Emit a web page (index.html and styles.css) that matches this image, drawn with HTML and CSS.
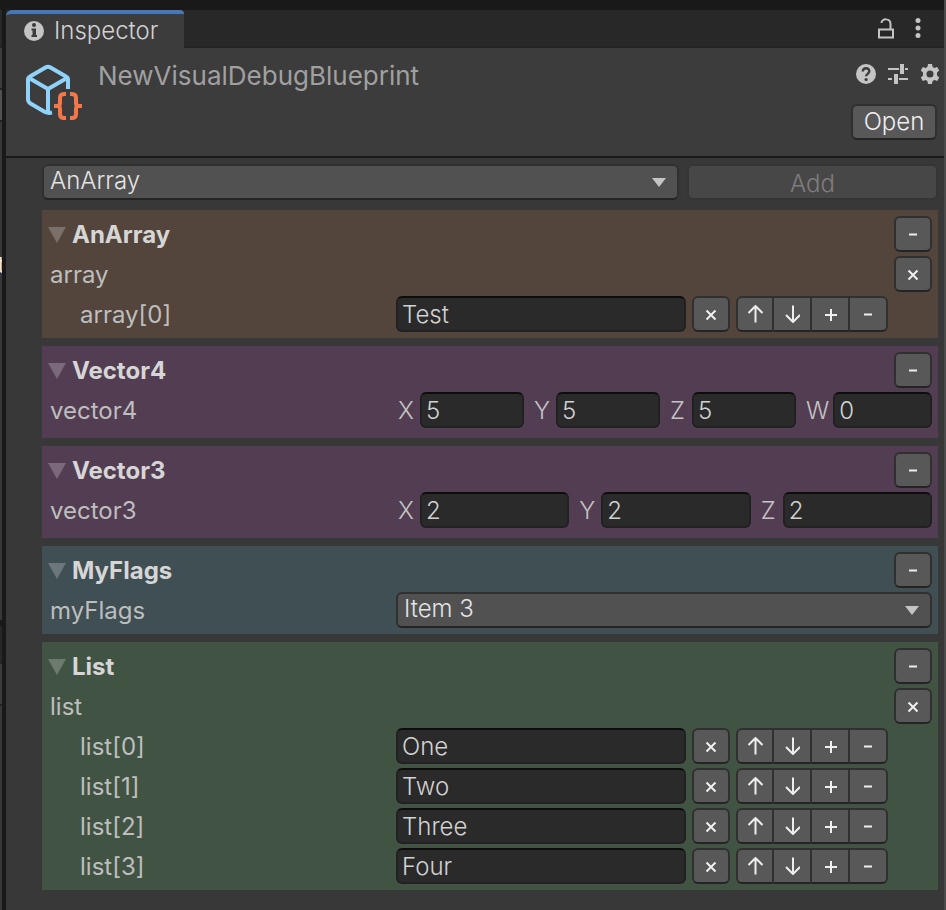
FILE: index.html
```
<!DOCTYPE html>
<html lang="en">
<head>
<meta charset="utf-8">
<title>Inspector</title>
<link rel="stylesheet" href="styles.css">
</head>
<body>
<svg class="sprite" aria-hidden="true">
  <symbol id="times" viewBox="0 0 16 16"><path d="M3.500 4.500l9 9M12.500 4.500l-9 9"/></symbol>
  <symbol id="up" viewBox="0 0 16 18"><path d="M8.500 17.500V1.500M1.500 8l7-7 7 7"/></symbol>
  <symbol id="down" viewBox="0 0 16 18"><path d="M9 .5v16M2 10l7 7 7-7"/></symbol>
  <symbol id="plus" viewBox="0 0 16 16"><path d="M3 9h12M9 3v12"/></symbol>
  <symbol id="minus" viewBox="0 0 16 16"><path d="M4 8.500h8"/></symbol>
</svg>
<div class="window">
  <div class="dock-left" aria-hidden="true">
    <i class="strip"></i><i class="toolbar"></i><i class="field"></i><i class="list"><b>t</b></i>
    <i class="gap"></i><i class="strip"></i><i class="toolbar"></i><i class="rest"></i>
  </div>
  <main class="inspector">
    <div class="tabs">
      <div class="tab">
        <svg width="20" height="20" viewBox="0 0 20 20"><circle cx="10" cy="10" r="10" fill="#c4c4c4"/><circle cx="10" cy="4" r="2" fill="#3c3c3c"/><path d="M7.500 7.500H12V14h1v2H7.500v-2h1V9.500h-1z" fill="#3c3c3c"/></svg>
        <span>Inspector</span>
      </div>
      <div class="tab-tools">
        <button class="icon" aria-label="Lock"><svg width="20" height="22" viewBox="0 0 20 22" fill="none" stroke="#c4c4c4" stroke-width="2"><path d="M3 11.500h14v8H3zM5.500 5c0-5 9-5 9 1v5"/></svg></button>
        <button class="icon" aria-label="More"><svg width="8" height="22" viewBox="0 0 8 22" fill="#c4c4c4"><circle cx="4" cy="2.500" r="2.500"/><circle cx="4" cy="10" r="2.500"/><circle cx="4" cy="17.500" r="2.500"/></svg></button>
      </div>
    </div>
    <header class="header">
      <svg class="asset" width="58" height="58" viewBox="0 0 58 58" fill="none">
        <g stroke="#8fd3fb" stroke-width="4" stroke-linejoin="round"><path d="M42 25V15q0-1.500-2-2.500L24.500 3.500Q22 2 19.500 3.500L4 12.500Q2 13.500 2 15.500V35q0 3 2.500 4.500L19 48q3 1.500 7 .5M3 14l19 11 19-11M22 25v24"/></g>
        <g stroke="#f2784b" stroke-width="4"><path d="M40 30h-2q-4 0-4 4v5q0 3-3 3h-3M40 54h-2q-4 0-4-4v-5q0-3-3-3h-3M44 30h2q4 0 4 4v5q0 3 3 3h3M44 54h2q4 0 4-4v-5q0-3 3-3h3"/></g>
      </svg>
      <h1>NewVisualDebugBlueprint</h1>
      <div class="header-side">
        <div class="header-tools">
          <button class="icon" aria-label="Help"><svg width="20" height="20" viewBox="0 0 20 20"><circle cx="10" cy="10" r="10" fill="#c4c4c4"/><path d="M6.800 7.500C6.800 3.200 13.300 3.200 13.300 7.300c0 2.500-3.200 2.700-3.200 5" fill="none" stroke="#3c3c3c" stroke-width="2.400"/><circle cx="10.100" cy="15.500" r="1.600" fill="#3c3c3c"/></svg></button>
          <button class="icon" aria-label="Presets"><svg width="20" height="20" viewBox="0 0 20 20" fill="#c4c4c4"><path d="M0 4h11v2H0zM12 0h4v10h-4zM17 4h3v2h-3zM0 14h4v2H0zM6 10h4v10H6zM11 14h9v2h-9z"/></svg></button>
          <button class="icon" aria-label="Settings"><svg width="20" height="20" viewBox="0 0 20 20"><path fill="#c4c4c4" fill-rule="evenodd" d="M8 0h4l.6 3 1.800 1 2.800-1 2 3.500L17 8.500v3l2.200 2-2 3.500-2.800-1-1.800 1-.6 3H8l-.6-3-1.800-1-2.800 1-2-3.500 2.200-2v-3L.8 6.500l2-3.500 2.800 1 1.800-1zM10 6.500a3.500 3.500 0 1 0 0 7 3.500 3.500 0 0 0 0-7z"/></svg></button>
        </div>
        <button class="btn open">Open</button>
      </div>
    </header>
    <div class="body">
      <div class="add-row">
        <div class="dropdown"><select aria-label="Type"><option>AnArray</option></select></div>
        <button class="btn add" disabled>Add</button>
      </div>

      <section class="card brown">
        <div class="row"><h2>AnArray</h2><button class="btn sq" aria-label="Remove"><svg><use href="#minus"/></svg></button></div>
        <div class="row"><span class="name">array</span><button class="btn sq" aria-label="Clear"><svg><use href="#times"/></svg></button></div>
        <div class="row item"><label class="name" for="a0">array[0]</label><input id="a0" value="Test"><button class="btn sq" aria-label="Clear"><svg><use href="#times"/></svg></button><div class="group"><button class="btn sq" aria-label="Up"><svg class="arrow"><use href="#up"/></svg></button><button class="btn sq" aria-label="Down"><svg class="arrow"><use href="#down"/></svg></button><button class="btn sq" aria-label="Insert"><svg><use href="#plus"/></svg></button><button class="btn sq" aria-label="Remove"><svg><use href="#minus"/></svg></button></div></div>
      </section>

      <section class="card purple">
        <div class="row"><h2>Vector4</h2><button class="btn sq" aria-label="Remove"><svg><use href="#minus"/></svg></button></div>
        <div class="row"><span class="name">vector4</span>
          <div class="vector"><label><span>X</span><input value="5"></label><label><span>Y</span><input value="5"></label><label><span>Z</span><input value="5"></label><label><span>W</span><input value="0"></label></div>
        </div>
      </section>

      <section class="card purple">
        <div class="row"><h2>Vector3</h2><button class="btn sq" aria-label="Remove"><svg><use href="#minus"/></svg></button></div>
        <div class="row"><span class="name">vector3</span>
          <div class="vector"><label><span>X</span><input value="2"></label><label><span>Y</span><input value="2"></label><label><span>Z</span><input value="2"></label></div>
        </div>
      </section>

      <section class="card blue">
        <div class="row"><h2>MyFlags</h2><button class="btn sq" aria-label="Remove"><svg><use href="#minus"/></svg></button></div>
        <div class="row"><label class="name" for="flags">myFlags</label><div class="dropdown"><select id="flags"><option>Item 3</option></select></div></div>
      </section>

      <section class="card green">
        <div class="row"><h2>List</h2><button class="btn sq" aria-label="Remove"><svg><use href="#minus"/></svg></button></div>
        <div class="row"><span class="name">list</span><button class="btn sq" aria-label="Clear"><svg><use href="#times"/></svg></button></div>
        <div class="row item"><label class="name" for="l0">list[0]</label><input id="l0" value="One"><button class="btn sq" aria-label="Clear"><svg><use href="#times"/></svg></button><div class="group"><button class="btn sq" aria-label="Up"><svg class="arrow"><use href="#up"/></svg></button><button class="btn sq" aria-label="Down"><svg class="arrow"><use href="#down"/></svg></button><button class="btn sq" aria-label="Insert"><svg><use href="#plus"/></svg></button><button class="btn sq" aria-label="Remove"><svg><use href="#minus"/></svg></button></div></div>
        <div class="row item"><label class="name" for="l1">list[1]</label><input id="l1" value="Two"><button class="btn sq" aria-label="Clear"><svg><use href="#times"/></svg></button><div class="group"><button class="btn sq" aria-label="Up"><svg class="arrow"><use href="#up"/></svg></button><button class="btn sq" aria-label="Down"><svg class="arrow"><use href="#down"/></svg></button><button class="btn sq" aria-label="Insert"><svg><use href="#plus"/></svg></button><button class="btn sq" aria-label="Remove"><svg><use href="#minus"/></svg></button></div></div>
        <div class="row item"><label class="name" for="l2">list[2]</label><input id="l2" value="Three"><button class="btn sq" aria-label="Clear"><svg><use href="#times"/></svg></button><div class="group"><button class="btn sq" aria-label="Up"><svg class="arrow"><use href="#up"/></svg></button><button class="btn sq" aria-label="Down"><svg class="arrow"><use href="#down"/></svg></button><button class="btn sq" aria-label="Insert"><svg><use href="#plus"/></svg></button><button class="btn sq" aria-label="Remove"><svg><use href="#minus"/></svg></button></div></div>
        <div class="row item"><label class="name" for="l3">list[3]</label><input id="l3" value="Four"><button class="btn sq" aria-label="Clear"><svg><use href="#times"/></svg></button><div class="group"><button class="btn sq" aria-label="Up"><svg class="arrow"><use href="#up"/></svg></button><button class="btn sq" aria-label="Down"><svg class="arrow"><use href="#down"/></svg></button><button class="btn sq" aria-label="Insert"><svg><use href="#plus"/></svg></button><button class="btn sq" aria-label="Remove"><svg><use href="#minus"/></svg></button></div></div>
      </section>
    </div>
  </main>
</div>
</body>
</html>
```
FILE: styles.css
```
* { box-sizing: border-box; }

body {
  margin: 0;
  background: #191919;
  color: #c4c4c4;
  font: 350 24px/38px Inter, "Liberation Sans", sans-serif;
}

button, input, select { font: inherit; color: inherit; }

.sprite { display: none; }

.window {
  display: flex;
  gap: 4px;
  min-height: 100vh;
  padding-top: 10px;
  border-right: 2px solid #4b4b4b;
}

/* Edge of the neighbouring dock */
.dock-left {
  display: flex;
  flex-direction: column;
  width: 2px;
  overflow: hidden;
}
.dock-left i { display: block; font-style: normal; border-bottom: 2px solid #232323; }
.dock-left .strip { height: 38px; background: #282828; }
.dock-left .toolbar { height: 42px; background: #3c3c3c; }
.dock-left .field { height: 32px; background: #515151; }
.dock-left .list {
  display: flex;
  justify-content: flex-end;
  height: 498px;
  padding-top: 124px;
  background: #383838;
  border: 0;
  color: #e4e4e4;
}
.dock-left b { margin-right: -3px; font-weight: 400; }
.dock-left .gap { height: 6px; background: #191919; border: 0; }
.dock-left .rest { flex: 1; background: #383838; border: 0; }

.inspector { flex: 1; min-width: 0; background: #383838; }

.tabs {
  display: flex;
  justify-content: space-between;
  height: 38px;
  background: #282828;
  box-shadow: inset 0 -2px #232323;
}
.tab {
  display: flex;
  align-items: center;
  gap: 10px;
  padding: 0 26px 0 18px;
  background: #3c3c3c;
  border-top: 4px solid #4678b8;
  border-radius: 6px 4px 0 0;
  color: #d2d2d2;
}
.tab-tools { display: flex; align-items: center; gap: 18px; padding-right: 22px; }

.icon { display: flex; padding: 0; border: 0; background: none; }

.header {
  display: flex;
  height: 110px;
  padding-left: 20px;
  background: #3c3c3c;
  border-bottom: 2px solid #1a1a1a;
}
.asset { margin-top: 16px; }
h1 {
  flex: 1;
  margin: 10px 0 0 14px;
  font-size: 26px;
  font-weight: 400;
  line-height: 36px;
  color: #a0a0a0;
}
.header-side { display: flex; flex-direction: column; align-items: flex-end; gap: 20px; padding-top: 16px; }
.header-tools { display: flex; gap: 12px; padding-right: 4px; }
.header .open { width: 86px; margin-right: 7px; }

.btn {
  height: 36px;
  padding: 0;
  border: 2px solid #303030;
  border-bottom-color: #242424;
  border-radius: 6px;
  background: #585858;
  color: #eee;
  line-height: 32px;
}
.btn:disabled { padding-top: 2px; background: #474747; border-color: #353535; color: #7e7e7e; }

.body { display: flex; flex-direction: column; gap: 8px; padding: 6px 6px 20px 36px; }

.add-row { display: flex; gap: 8px; margin-bottom: 2px; }
.add-row .add { width: 28%; }

.dropdown { position: relative; flex: 1; }
.dropdown::after {
  content: "";
  position: absolute;
  top: 14px;
  right: 13px;
  border: 7px solid transparent;
  border-top: 9px solid #c4c4c4;
  border-bottom: 0;
  pointer-events: none;
}
select {
  appearance: none;
  display: block;
  width: 100%;
  height: 36px;
  padding: 0 6px 2px;
  line-height: 30px;
  border: 2px solid #303030;
  border-bottom-color: #242424;
  border-radius: 6px;
  background: #515151;
  color: #e4e4e4;
}

.card { display: flex; flex-direction: column; gap: 4px; padding: 6px 6px 6px 8px; }
.brown { background: #53453c; }
.purple { background: #533d52; padding-bottom: 10px; }
.blue { background: #3f4f54; }
.green { background: #415444; }

.row { display: flex; justify-content: space-between; height: 36px; }
.item { gap: 6px; padding-right: 44px; }

h2 { display: flex; align-items: center; gap: 6px; height: 38px; margin: 0; font-size: 24px; font-weight: 700; color: #d6d6d6; }
h2::before {
  content: "";
  border: 9px solid transparent;
  border-top: 16px solid rgba(255, 255, 255, .23);
  border-bottom: 0;
  margin-left: -2px;
}

.name { flex: 0 0 346px; font-weight: 400; color: #bebebe; }
.item .name { flex-basis: 340px; padding-left: 30px; }

input {
  flex: 1;
  width: 0;
  min-width: 0;
  height: 36px;
  padding: 2px 4px 0;
  border: 2px solid #212121;
  border-top-color: #0d0d0d;
  border-radius: 6px;
  background: #2a2a2a;
  color: #d2d2d2;
}

.vector { display: flex; flex: 1; gap: 8px; min-width: 0; }
.vector label { display: flex; flex: 1 1 0; min-width: 0; }
.vector span { min-width: 24px; padding: 0 4px 0 2px; }

.sq { display: flex; align-items: center; justify-content: center; flex: none; width: 38px; }
.sq svg { width: 16px; height: 16px; fill: none; stroke: #eee; stroke-width: 2; }
.sq .arrow { height: 18px; }

.group { display: flex; }
.group .btn { border-radius: 0; border-left-width: 0; }
.group .btn:first-child { border-left-width: 2px; border-radius: 6px 0 0 6px; }
.group .btn:last-child { border-radius: 0 6px 6px 0; }
```
